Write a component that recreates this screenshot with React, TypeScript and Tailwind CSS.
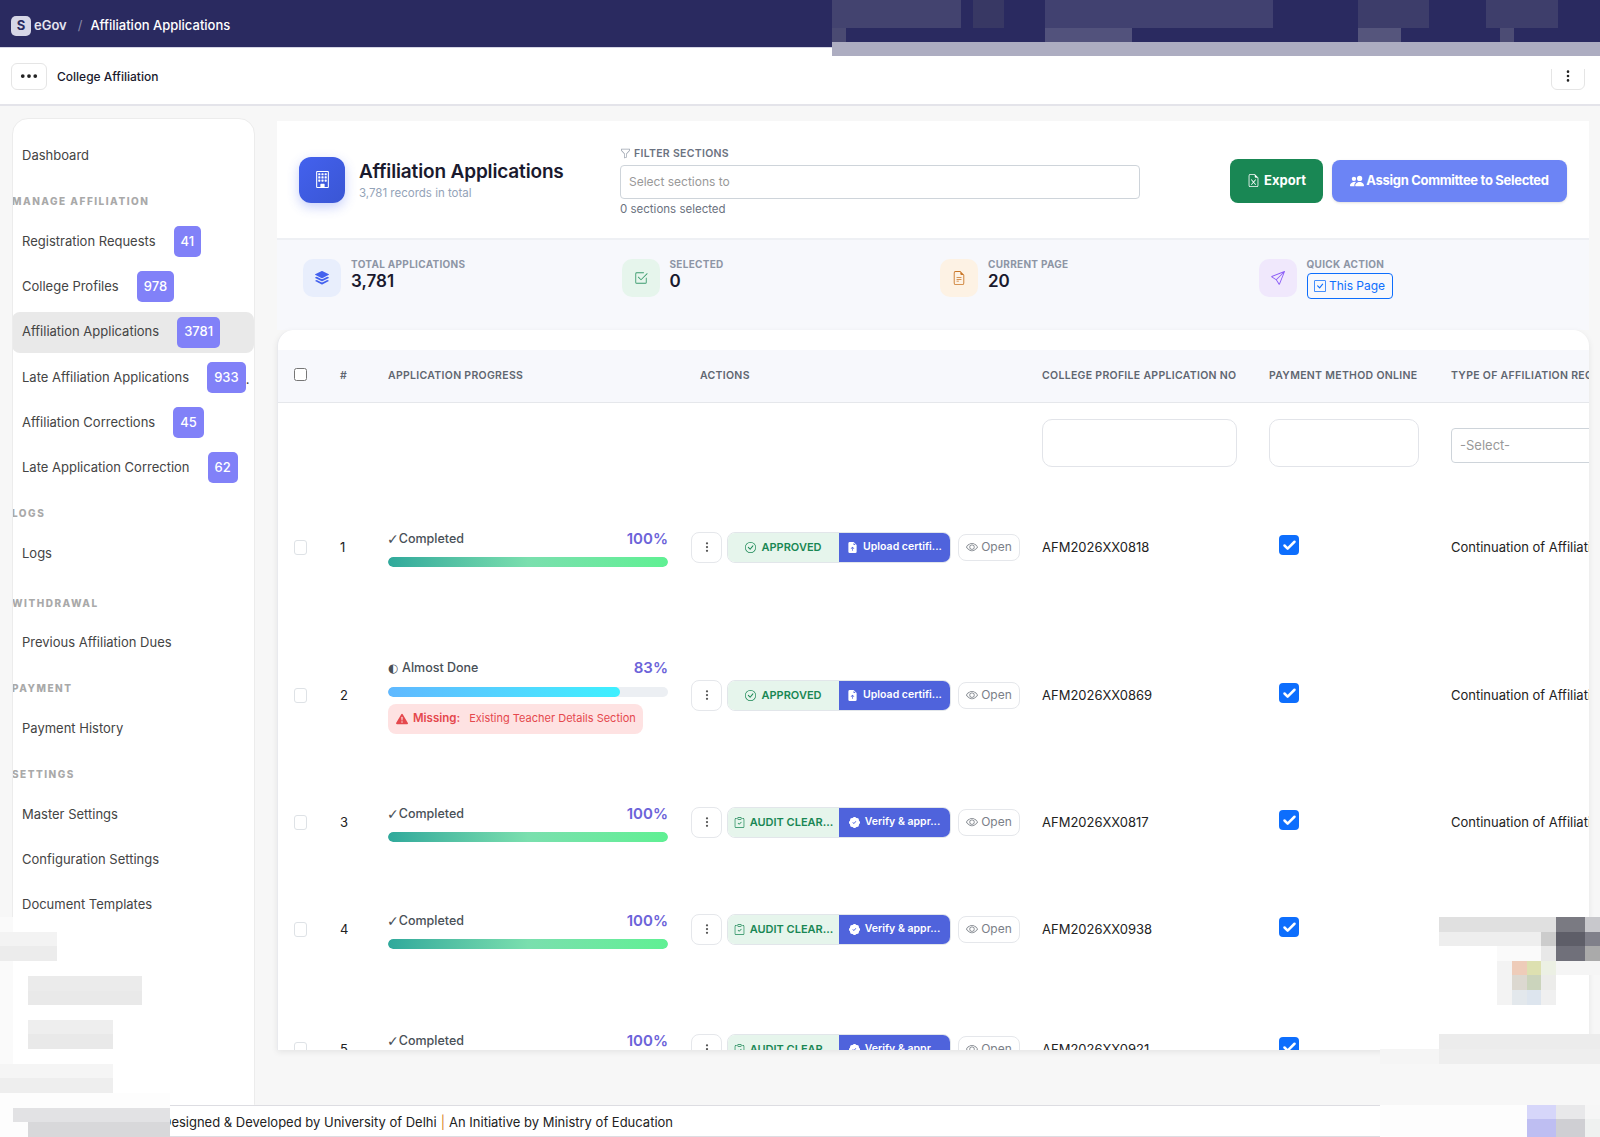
import {
  BsBuilding,
  BsCheck2Square,
  BsCheckCircle,
  BsCheckSquare,
  BsClipboardCheck,
  BsExclamationTriangleFill,
  BsEye,
  BsFileEarmarkArrowUpFill,
  BsFileEarmarkExcel,
  BsFileEarmarkText,
  BsFunnel,
  BsPatchCheckFill,
  BsPeopleFill,
  BsSend,
  BsStack,
  BsThreeDots,
  BsThreeDotsVertical,
} from "react-icons/bs";
import { Check } from "lucide-react";

type NavEntry = { label: string; badge?: string; active?: boolean };
type NavGroup = { title?: string; top?: string; items: NavEntry[] };

const navGroups: NavGroup[] = [
  { items: [{ label: "Dashboard" }] },
  {
    title: "MANAGE AFFILIATION",
    top: "mt-[17px] mb-[10px]",
    items: [
      { label: "Registration Requests", badge: "41" },
      { label: "College Profiles", badge: "978" },
      { label: "Affiliation Applications", badge: "3781", active: true },
      { label: "Late Affiliation Applications", badge: "933" },
      { label: "Affiliation Corrections", badge: "45" },
      { label: "Late Application Correction", badge: "62" },
    ],
  },
  { title: "LOGS", top: "mt-[17px] mb-[10px]", items: [{ label: "Logs" }] },
  { title: "WITHDRAWAL", top: "mt-[20px] mb-[10px]", items: [{ label: "Previous Affiliation Dues" }] },
  { title: "PAYMENT", top: "mt-[16px] mb-[10px]", items: [{ label: "Payment History" }] },
  {
    title: "SETTINGS",
    top: "mt-[17px] mb-[10px]",
    items: [{ label: "Master Settings" }, { label: "Configuration Settings" }, { label: "Document Templates" }],
  },
];

type Application = {
  no: number;
  appNo: string;
  progress: number;
  height: string;
  audit?: boolean;
  type?: string;
};

const applications: Application[] = [
  { no: 1, appNo: "AFM2026XX0818", progress: 100, height: "h-[146px]", type: "Continuation of Affiliation" },
  { no: 2, appNo: "AFM2026XX0869", progress: 83, height: "h-[150px]", type: "Continuation of Affiliation" },
  { no: 3, appNo: "AFM2026XX0817", progress: 100, height: "h-[104px]", audit: true, type: "Continuation of Affiliation" },
  { no: 4, appNo: "AFM2026XX0938", progress: 100, height: "h-[110px]", audit: true },
  { no: 5, appNo: "AFM2026XX0921", progress: 100, height: "h-[130px]", audit: true },
];

// pixelated redaction blocks: x, y, w, h, colour
const patches: [number, number, number, number, string][] = [
  // top right
  [832, 0, 768, 42, "#2a2a60"],
  [832, 0, 129, 28, "#43436f"],
  [973, 0, 31, 28, "#383864"],
  [1045, 0, 228, 28, "#414170"],
  [1358, 0, 71, 28, "#3d3d6a"],
  [1486, 0, 72, 28, "#3e3e6b"],
  [832, 28, 14, 14, "#4a4a72"],
  [1045, 28, 87, 14, "#52527c"],
  [1358, 28, 43, 14, "#55557c"],
  [1500, 28, 14, 14, "#4c4c74"],
  [832, 42, 768, 14, "#adadc1"],
  [1500, 56, 100, 13, "#ffffff"],
  // sidebar bottom
  [0, 917, 13, 188, "#fafafa"],
  [13, 917, 241, 188, "#ffffff"],
  [0, 932, 57, 14, "#f3f3f3"],
  [0, 946, 57, 15, "#ececec"],
  [28, 976, 114, 15, "#ebebeb"],
  [28, 991, 114, 14, "#e9e9e9"],
  [28, 1020, 85, 14, "#eeeeee"],
  [28, 1034, 85, 15, "#e9e9e9"],
  [0, 1064, 113, 14, "#f5f5f5"],
  [0, 1078, 113, 15, "#eeeeee"],
  [0, 1093, 170, 15, "#fdfdfd"],
  [0, 1108, 170, 14, "#fdfdfd"],
  [13, 1108, 157, 14, "#e2e2e4"],
  [0, 1122, 170, 15, "#fdfdfd"],
  [28, 1122, 142, 15, "#d8d8da"],
  // bottom right
  [1439, 917, 117, 15, "#e0e0e0"],
  [1556, 917, 29, 15, "#7a7a82"],
  [1585, 917, 15, 15, "#c8c8cc"],
  [1439, 932, 102, 14, "#eeeeee"],
  [1541, 932, 15, 14, "#cccccc"],
  [1556, 932, 29, 14, "#5e5e68"],
  [1585, 932, 15, 14, "#80808a"],
  [1497, 946, 44, 15, "#fafafa"],
  [1541, 946, 15, 15, "#e8e8e8"],
  [1556, 946, 29, 15, "#70707a"],
  [1585, 946, 15, 15, "#aaaaaa"],
  [1497, 961, 15, 44, "#f3f3f3"],
  [1512, 961, 15, 14, "#eeccb9"],
  [1527, 961, 14, 14, "#dde0b0"],
  [1541, 961, 15, 14, "#ecf0e4"],
  [1556, 961, 44, 14, "#f5f5f5"],
  [1512, 975, 15, 15, "#dcd8d0"],
  [1527, 975, 14, 15, "#cbd4bc"],
  [1541, 975, 15, 15, "#ececea"],
  [1512, 990, 15, 15, "#e3e8ec"],
  [1527, 990, 14, 15, "#dde5ee"],
  [1541, 990, 15, 15, "#f0f0f0"],
  [1439, 1034, 161, 15, "#ececec"],
  [1380, 1049, 59, 15, "#f5f5f5"],
  [1439, 1049, 161, 15, "#eeeeee"],
  [1380, 1105, 147, 32, "#fdfdfd"],
  [1527, 1105, 29, 14, "#d6d6fa"],
  [1556, 1105, 29, 14, "#e8e8ea"],
  [1585, 1105, 15, 14, "#f6f6f6"],
  [1527, 1119, 29, 18, "#bebef2"],
  [1556, 1119, 29, 18, "#cfcfd3"],
  [1585, 1119, 15, 18, "#eff1f0"],
];

function SideNav() {
  return (
    <aside className="w-[243px] shrink-0 mt-[12px] rounded-t-2xl border border-[#ececec] bg-white pt-[13px] overflow-hidden">
      {navGroups.map((group, i) => (
        <div key={i}>
          {group.title && (
            <div className={`h-[14px] -ml-px text-[10px] leading-[14px] font-extrabold tracking-[1.5px] text-[#a9a9a9] ${group.top}`}>
              {group.title}
            </div>
          )}
          {group.items.map((item) => (
            <div key={item.label} className="flex h-[45.2px] items-center pt-[2px]">
              <div
                className={`flex h-[41px] w-[calc(100%+1px)] shrink-0 -ml-px items-center pl-[10px] rounded-lg text-[13px] text-[#444444] ${item.active ? "bg-[#e9e9e9]" : ""}`}
              >
                <span className="whitespace-nowrap">{item.label}</span>
                {item.badge && (
                  <span className="ml-[18px] flex h-[31px] shrink-0 items-center rounded-[5px] bg-[#8181f8] px-[7px] text-[13px] font-medium text-white">
                    {item.badge}
                  </span>
                )}
                {item.badge === "933" && <span className="self-end mb-3 text-[13px] leading-none">.</span>}
              </div>
            </div>
          ))}
        </div>
      ))}
    </aside>
  );
}

function StatTile({ box, icon, label, value }: { box: string; icon: React.ReactNode; label: string; value: string }) {
  return (
    <div className="flex items-center gap-[10px] pl-[7px]">
      <div className={`flex h-[38px] w-[38px] items-center justify-center rounded-[10px] text-[14px] ${box}`}>{icon}</div>
      <div className="-mt-[8px]">
        <div className="text-[10px] leading-[14px] font-bold tracking-[0.3px] text-[#8d95a5]">{label}</div>
        <div className="text-[17px] leading-[20px] font-semibold text-[#1a1a2e]">{value}</div>
      </div>
    </div>
  );
}

function PageHeader() {
  return (
    <div className="flex h-[117px] items-center bg-white pl-[22px] pr-[22px]">
      <div className="flex h-[46px] w-[46px] shrink-0 items-center justify-center rounded-[12px] bg-gradient-to-br from-[#4361ee] to-[#3a56d4] text-white text-[17px] shadow-[0_4px_12px_rgba(67,97,238,0.3)]">
        <BsBuilding />
      </div>
      <div className="ml-[14px] w-[261px]">
        <h1 className="text-[19px] leading-[26px] font-semibold tracking-[-0.15px] text-[#1a1a2e]">Affiliation Applications</h1>
        <p className="text-[11.5px] leading-[16px] text-[#94a3b8]">3,781 records in total</p>
      </div>
      <div className="w-[520px] pt-[4px]">
        <div className="flex items-center gap-[3px] text-[10.5px] leading-[14px] font-semibold tracking-[0.3px] text-[#6b7280]">
          <BsFunnel className="text-[11px] text-[#9ca3af]" />
          FILTER SECTIONS
        </div>
        <div className="mt-[4px] flex h-[34px] items-center rounded-[4px] border border-[#ced4da] px-2 text-[12px] text-[#999999]">
          Select sections to
        </div>
        <div className="mt-[2px] text-[11.5px] leading-[16px] text-[#6b7280]">0 sections selected</div>
      </div>
      <div className="ml-auto mt-[2px] flex items-center gap-[9px]">
        <button className="flex h-[44px] w-[93px] items-center justify-center gap-1 rounded-lg bg-[#198754] text-[13px] font-bold text-white">
          <BsFileEarmarkExcel className="text-[13px]" />
          Export
        </button>
        <button className="flex h-[42px] w-[235px] items-center justify-center gap-[2px] rounded-lg bg-[#6c84f5] text-[13px] font-bold tracking-[-0.3px] text-white shadow-sm">
          <BsPeopleFill className="text-[14px]" />
          Assign Committee to Selected
        </button>
      </div>
    </div>
  );
}

function StatsStrip() {
  return (
    <div className="grid h-[92px] grid-cols-4 border-t-2 border-[#eef0f4] bg-[#f7f8fc] px-[19px] pt-[17px] pb-[34px]">
      <StatTile box="bg-[#e8eefc] text-[#4361ee]" icon={<BsStack />} label="TOTAL APPLICATIONS" value="3,781" />
      <StatTile box="bg-[#e6f5ec] text-[#3b9b6d]" icon={<BsCheck2Square />} label="SELECTED" value="0" />
      <StatTile box="bg-[#fdf2e4] text-[#c97524]" icon={<BsFileEarmarkText />} label="CURRENT PAGE" value="20" />
      <div className="flex items-center gap-[10px] pl-[7px]">
        <div className="flex h-[38px] w-[38px] items-center justify-center rounded-[10px] bg-[#f0e8fc] text-[14px] text-[#8b5cf6]">
          <BsSend />
        </div>
        <div>
          <div className="text-[10px] leading-[14px] font-bold tracking-[0.3px] text-[#8d95a5]">QUICK ACTION</div>
          <button className="mt-[2px] flex h-[26px] w-[86px] items-center justify-center gap-[3px] rounded-[4px] border border-[#0d6efd] text-[12px] text-[#0d6efd]">
            <BsCheckSquare className="text-[12px]" />
            This Page
          </button>
        </div>
      </div>
    </div>
  );
}

function ActionsCell({ audit }: { audit?: boolean }) {
  return (
    <div className="flex items-center">
      <button className="flex h-[31px] w-[31px] items-center justify-center rounded-lg border border-[#e5e7eb] text-[12px] text-[#555555]">
        <BsThreeDotsVertical />
      </button>
      <div className="ml-[5px] flex h-[31px] w-[224px] overflow-hidden rounded-lg border border-[#e2e6ea] font-semibold">
        <div className="flex w-[111px] items-center justify-center gap-[5px] bg-[#e6f5ec] text-[11px] text-[#198754]">
          {audit ? <BsClipboardCheck className="text-[11px] shrink-0" /> : <BsCheckCircle className="text-[11px] shrink-0" />}
          {audit ? "AUDIT CLEAR..." : "APPROVED"}
        </div>
        <div className="flex flex-1 items-center justify-center gap-[5px] bg-[#4f63dc] text-[10.5px] text-white">
          {audit ? <BsPatchCheckFill className="text-[11px] shrink-0" /> : <BsFileEarmarkArrowUpFill className="text-[11px] shrink-0" />}
          {audit ? "Verify & appr..." : "Upload certifi..."}
        </div>
      </div>
      <button className="ml-[7px] flex h-[27px] w-[62px] items-center justify-center gap-[3px] rounded-lg border border-[#e5e7eb] text-[12px] text-[#7b8088]">
        <BsEye className="text-[12px]" />
        Open
      </button>
    </div>
  );
}

function ProgressCell({ value }: { value: number }) {
  const done = value === 100;
  return (
    <div className="w-[280px] pt-[2px]">
      <div className="flex h-[20px] items-center justify-between">
        <span className={`flex items-center text-[12.5px] font-medium text-[#495057] ${done ? "-ml-px gap-0" : "gap-[4px]"}`}>
          <span className={`font-['DejaVu_Sans',sans-serif] ${done ? "text-[14px]" : "text-[11.5px]"}`}>{done ? "✓" : "◐"}</span>
          {done ? "Completed" : "Almost Done"}
        </span>
        <span className="text-[15px] font-semibold text-[#6c63d9]">{value}%</span>
      </div>
      <div className="mt-[8px] h-[10px] overflow-hidden rounded-full bg-[#eceff3]">
        {done ? (
          <div className="h-full w-full rounded-full bg-gradient-to-r from-[#2fa99b] via-[#7adfae] to-[#5ff093]" />
        ) : (
          <div className="h-full w-[83%] rounded-full bg-gradient-to-r from-[#5fb8ff] to-[#3df0ff]" />
        )}
      </div>
      {!done && (
        <div className="mt-[7px] flex h-[30px] w-[255px] items-center gap-[5px] rounded-lg bg-[#fee2e2] pl-2 text-[11.5px] text-[#e5484d] whitespace-nowrap">
          <BsExclamationTriangleFill className="text-[12px]" />
          <span className="font-semibold">Missing:</span>
          <span className="ml-[4px] text-[11px]">Existing Teacher Details Section</span>
        </div>
      )}
    </div>
  );
}

function ApplicationsTable() {
  return (
    <div className="h-[720px] overflow-hidden rounded-t-2xl border-l border-[#e9eaee] bg-white pt-[20px] shadow-[0_2px_6px_rgba(0,0,0,0.08)]">
      <div className="flex h-[53px] w-[1500px] items-center border-b border-[#e5e7eb] bg-[#f7f8fc] text-[10.5px] font-semibold tracking-[0.3px] text-[#5f6670] whitespace-nowrap">
        <div className="w-[46px] pl-[16px] flex items-center -mt-[4px]">
          <input type="checkbox" readOnly className="h-[13px] w-[13px]" />
        </div>
        <div className="w-[64px] pl-[16px]">#</div>
        <div className="w-[303px]">APPLICATION PROGRESS</div>
        <div className="w-[351px] pl-[9px]">ACTIONS</div>
        <div className="w-[227px]">COLLEGE PROFILE APPLICATION NO</div>
        <div className="w-[182px]">PAYMENT METHOD ONLINE</div>
        <div className="flex-1">TYPE OF AFFILIATION REQUEST</div>
      </div>
      <div className="flex h-[71px] w-[1500px]">
        <div className="w-[764px]" />
        <div className="w-[227px] pt-[16px]">
          <div className="h-[48px] w-[195px] rounded-[10px] border border-[#e2e4e9]" />
        </div>
        <div className="w-[182px] pt-[16px]">
          <div className="h-[48px] w-[150px] rounded-[10px] border border-[#e2e4e9]" />
        </div>
        <div className="flex-1 pt-[25px]">
          <div className="flex h-[35px] w-[200px] items-center rounded-[4px] border border-[#ced4da] pl-2 text-[13px] text-[#999999]">-Select-</div>
        </div>
      </div>
      {applications.map((app) => (
        <div key={app.no} className={`flex w-[1500px] items-center text-[13px] text-[#222222] ${app.height}`}>
          <div className="w-[46px] pl-[16px]">
            <div className="h-[15px] w-[13px] rounded-[3px] border border-[#dee2e6]" />
          </div>
          <div className="w-[64px] pl-[16px] pt-px">{app.no}</div>
          <div className="w-[303px]">
            <ProgressCell value={app.progress} />
          </div>
          <div className="w-[351px]">
            <ActionsCell audit={app.audit} />
          </div>
          <div className="w-[227px] pt-px">{app.appNo}</div>
          <div className="w-[182px] pl-[10px]">
            <span className="-mt-1 flex h-[20px] w-[20px] items-center justify-center rounded-[4px] bg-[#0d6efd] text-white">
              <Check size={15} strokeWidth={4} />
            </span>
          </div>
          <div className="flex-1 whitespace-nowrap pt-px">{app.type}</div>
        </div>
      ))}
    </div>
  );
}

export default function App() {
  return (
    <div className="relative flex h-[1137px] w-[1600px] flex-col overflow-hidden bg-[#f7f7f7] font-['Inter',sans-serif]">
      <header className="flex h-[48px] shrink-0 items-center border-b border-[#d5d5e5] bg-[#2a2a60] pl-[11px] pt-[5px] text-[13px] text-white">
        <span className="flex h-[20px] w-[20px] items-center justify-center rounded-[5px] bg-[#d6d6e6] text-[13px] font-bold text-[#2a2a60]">S</span>
        <span className="ml-[3px] text-[13px] font-semibold text-[#e4e4ef]">eGov</span>
        <span className="ml-[11px] text-[#8a8aa8]">/</span>
        <span className="ml-[8px] font-medium">Affiliation Applications</span>
      </header>
      <div className="flex h-[58px] shrink-0 items-center justify-between border-b-2 border-[#e4e4ea] bg-white pl-[11px] pr-[15px]">
        <div className="flex items-center">
          <button className="flex h-[27px] w-[36px] items-center justify-center rounded-md border border-[#e5e5e5] text-[20px] text-[#222222]">
            <BsThreeDots />
          </button>
          <span className="ml-[10px] pt-px text-[12px] font-medium text-[#1a1a2e]">College Affiliation</span>
        </div>
        <button className="flex h-[27px] w-[34px] items-center justify-center rounded-md border border-[#e5e5e5] text-[14px] text-[#222222]">
          <BsThreeDotsVertical />
        </button>
      </div>
      <div className="flex min-h-0 flex-1 pl-[12px]">
        <SideNav />
        <main className="ml-[22px] mt-[15px] w-[1312px]">
          <PageHeader />
          <StatsStrip />
          <ApplicationsTable />
        </main>
      </div>
      <footer className="flex h-[32px] shrink-0 items-center border-y border-[#dddde2] bg-white pl-[162px] pt-[3px] text-[13px] text-[#222222]">
        Designed &amp; Developed by University of Delhi
        <span className="mx-[4px] text-[#d9822b]">|</span>
        An Initiative by Ministry of Education
      </footer>
      {patches.map(([x, y, w, h, c], i) => (
        <div key={i} className="absolute" style={{ left: x, top: y, width: w, height: h, backgroundColor: c }} />
      ))}
    </div>
  );
}
